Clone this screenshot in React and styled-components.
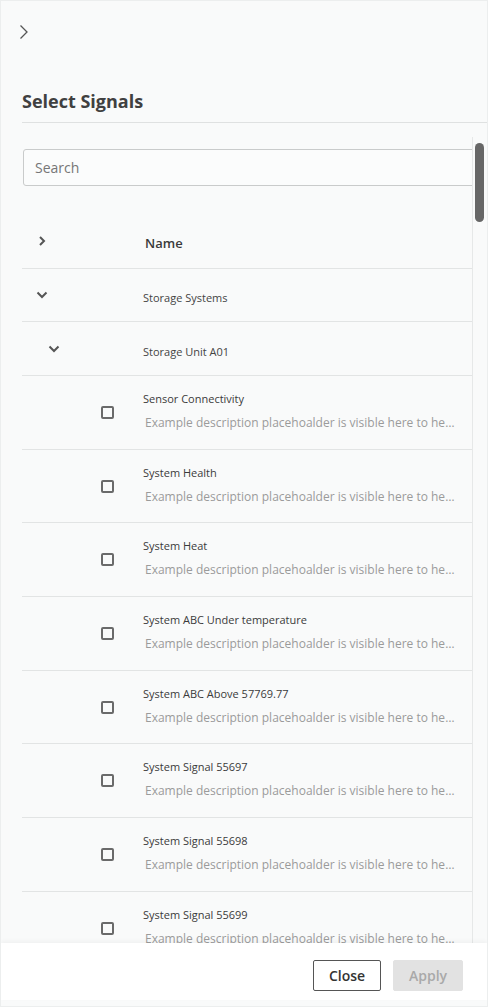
import styled, { createGlobalStyle } from "styled-components";

const GlobalStyle = createGlobalStyle`
  html, body {
    margin: 0;
    padding: 0;
    height: 100%;
  }
  body {
    font-family: "Open Sans", "Liberation Sans", sans-serif;
    color: #3d3d3d;
  }
`;

const SIGNALS = [
  "Sensor Connectivity",
  "System Health",
  "System Heat",
  "System ABC Under temperature",
  "System ABC Above 57769.77",
  "System Signal 55697",
  "System Signal 55698",
  "System Signal 55699",
  "System Signal 55700",
];

const DESCRIPTION =
  "Example description placehoalder is visible here to help the user understand the signal";

const Panel = styled.div`
  height: 100vh;
  box-sizing: border-box;
  display: flex;
  flex-direction: column;
  background: #f9fafa;
  border: 1px solid #eceeee;
  overflow: hidden;
`;

const Top = styled.div`
  padding: 23px 0 0 18px;
  height: 16px;
  display: flex;
`;

const Heading = styled.h2`
  margin: 49px 0 0 21px;
  padding-bottom: 9px;
  border-bottom: 1px solid #dfe1e1;
  font-size: 18px;
  line-height: 24px;
  font-weight: 700;
  color: #404040;
`;

const Body = styled.div`
  flex: 1;
  min-height: 0;
  margin-top: 14px;
  display: flex;
`;

const List = styled.div`
  flex: 1;
  min-width: 0;
  overflow: hidden;
  padding: 12px 0 0 21px;
`;

const Track = styled.div`
  width: 15px;
  flex-shrink: 0;
  border-left: 1px solid #e6e8e8;
  padding: 6px 0 0 2px;
  box-sizing: border-box;
`;

const Thumb = styled.div`
  width: 9px;
  height: 79px;
  border-radius: 5px;
  background: #676767;
`;

const Search = styled.input`
  display: block;
  box-sizing: border-box;
  width: calc(100% + 4px);
  height: 37px;
  margin: 0 0 27px 1px;
  padding: 0 11px;
  border: 1px solid #c9cbcb;
  border-radius: 3px;
  background: #fbfcfc;
  font-family: inherit;
  font-size: 14px;
  color: #333;
  outline: none;

  &::placeholder {
    color: #767676;
  }
`;

const Row = styled.div`
  display: flex;
  box-sizing: border-box;
  align-items: ${(p) => (p.$signal ? "flex-start" : "center")};
  height: ${(p) => p.$height}px;
  border-bottom: 1px solid #e2e4e4;
`;

const Lead = styled.div`
  width: 108px;
  flex-shrink: 0;
  box-sizing: border-box;
  padding-left: ${(p) => p.$indent}px;
  padding-top: ${(p) => p.$top || 0}px;
  display: flex;
  align-items: center;
`;

const Cell = styled.div`
  flex: 1;
  min-width: 0;
  padding: ${(p) => (p.$signal ? "15px 15px 0 13px" : "2px 15px 0 13px")};
`;

const HeaderLabel = styled.span`
  padding-left: 2px;
  font-size: 13px;
  font-weight: 600;
  color: #3a3a3a;
`;

const GroupLabel = styled.span`
  font-size: 11px;
  color: #444;
`;

const Title = styled.div`
  font-size: 11px;
  line-height: 16px;
  color: #3b3b3b;
`;

const Description = styled.div`
  margin-top: 7px;
  padding-left: 2px;
  font-size: 12px;
  line-height: 18px;
  color: #9b9b9b;
  white-space: nowrap;
  overflow: hidden;
  text-overflow: ellipsis;
`;

const Checkbox = styled.span`
  display: block;
  width: 13px;
  height: 13px;
  box-sizing: border-box;
  border: 2px solid #6a6a6a;
  border-radius: 2px;
`;

const Footer = styled.div`
  height: 57px;
  margin-bottom: 6px;
  box-sizing: border-box;
  padding: 17px 24px 0 0;
  display: flex;
  justify-content: flex-end;
  align-items: flex-start;
  gap: 12px;
  background: #ffffff;
  box-shadow: 0 -2px 4px rgba(0, 0, 0, 0.04);
  position: relative;
`;

const Button = styled.button`
  height: 31px;
  min-width: ${(p) => p.$width}px;
  box-sizing: border-box;
  border-radius: 2px;
  font-family: inherit;
  font-size: 14px;
  font-weight: 600;
  border: 1px solid ${(p) => (p.$primary ? "#e2e2e2" : "#555")};
  background: ${(p) => (p.$primary ? "#e2e2e2" : "#fff")};
  color: ${(p) => (p.$primary ? "#a9a9a9" : "#333")};
`;

const ChevronRight = ({ thin }) =>
  thin ? (
    <svg width="10" height="16" viewBox="0 0 10 16">
      <path d="M1.5 1.5 L8 8 L1.5 14.5" fill="none" stroke="#555" strokeWidth="1.3" />
    </svg>
  ) : (
    <svg width="8" height="10" viewBox="0 0 8 10">
      <path d="M2 1 L6 5 L2 9" fill="none" stroke="#555" strokeWidth="2" />
    </svg>
  );

const ChevronDown = () => (
  <svg width="12" height="8" viewBox="0 0 12 8">
    <path d="M1.5 1.5 L6 6 L10.5 1.5" fill="none" stroke="#555" strokeWidth="2" />
  </svg>
);

export default function App() {
  return (
    <>
      <GlobalStyle />
      <Panel>
        <Top>
          <ChevronRight thin />
        </Top>
        <Heading>Select Signals</Heading>
        <Body>
          <List>
            <Search placeholder="Search" />
            <Row $height={56}>
              <Lead $indent={16}>
                <ChevronRight />
              </Lead>
              <Cell>
                <HeaderLabel>Name</HeaderLabel>
              </Cell>
            </Row>
            <Row $height={53}>
              <Lead $indent={14}>
                <ChevronDown />
              </Lead>
              <Cell>
                <GroupLabel>Storage Systems</GroupLabel>
              </Cell>
            </Row>
            <Row $height={54}>
              <Lead $indent={26}>
                <ChevronDown />
              </Lead>
              <Cell>
                <GroupLabel>Storage Unit A01</GroupLabel>
              </Cell>
            </Row>
            {SIGNALS.map((name) => (
              <Row key={name} $signal $height={73.7}>
                <Lead $indent={79} $top={30}>
                  <Checkbox />
                </Lead>
                <Cell $signal>
                  <Title>{name}</Title>
                  <Description>{DESCRIPTION}</Description>
                </Cell>
              </Row>
            ))}
          </List>
          <Track>
            <Thumb />
          </Track>
        </Body>
        <Footer>
          <Button $width={68}>Close</Button>
          <Button $primary $width={70}>
            Apply
          </Button>
        </Footer>
      </Panel>
    </>
  );
}
